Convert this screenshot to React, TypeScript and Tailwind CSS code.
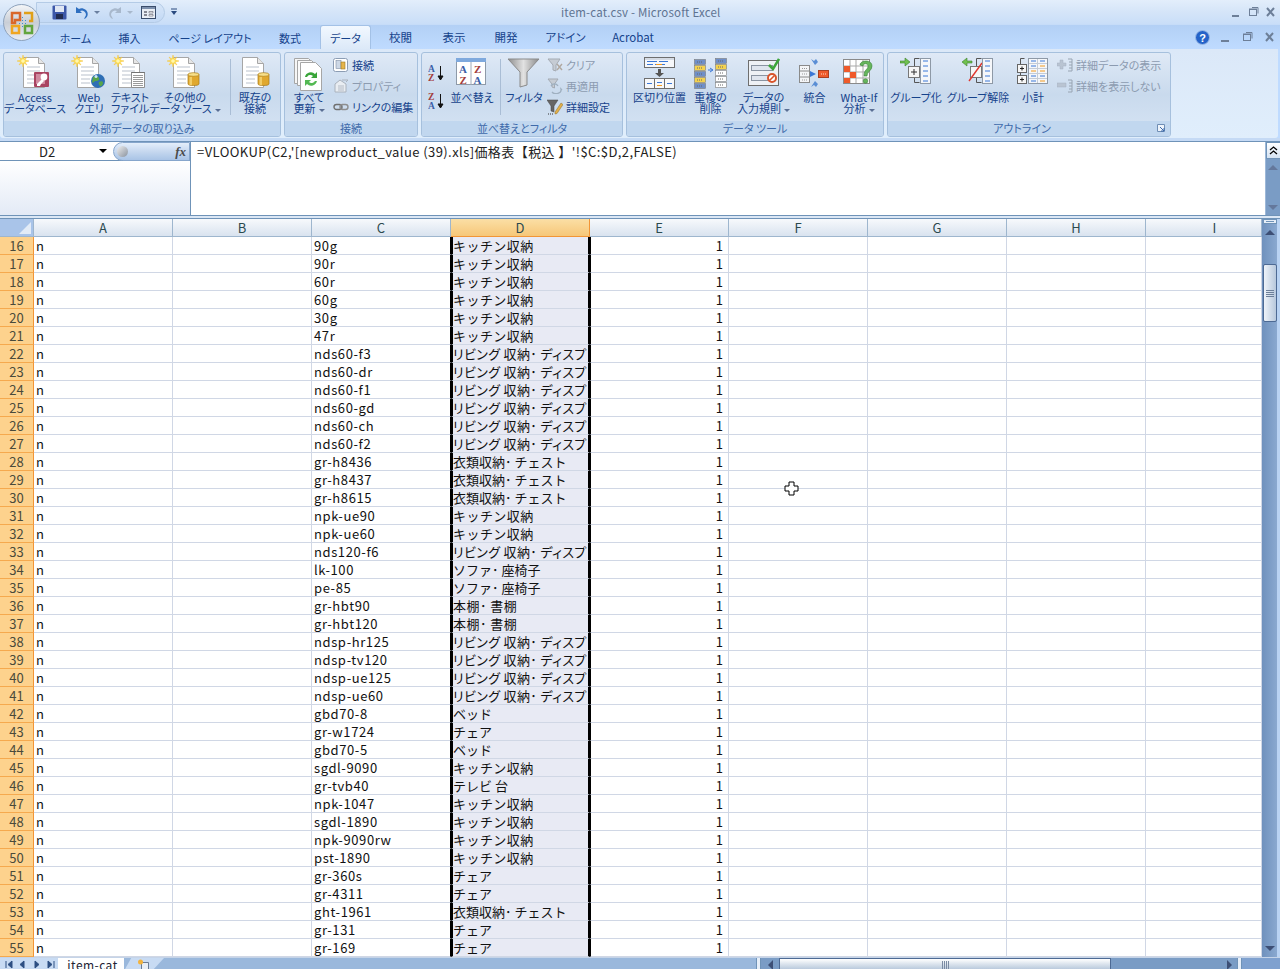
import React from "react";

const codes = ["90g","90r","60r","60g","30g","47r","nds60-f3","nds60-dr","nds60-f1","nds60-gd","nds60-ch","nds60-f2","gr-h8436","gr-h8437","gr-h8615","npk-ue90","npk-ue60","nds120-f6","lk-100","pe-85","gr-hbt90","gr-hbt120","ndsp-hr125","ndsp-tv120","ndsp-ue125","ndsp-ue60","gbd70-8","gr-w1724","gbd70-5","sgdl-9090","gr-tvb40","npk-1047","sgdl-1890","npk-9090rw","pst-1890","gr-360s","gr-4311","ght-1961","gr-131","gr-169"];
const K = "キッチン収納", L = "リビング 収納･ ディスプレイ", C = "衣類収納･ チェスト", S = "ソファ･ 座椅子", H = "本棚･ 書棚", B = "ベッド", T = "チェア";
const cats = [K,K,K,K,K,K,L,L,L,L,L,L,C,C,C,K,K,L,S,S,H,H,L,L,L,L,B,T,B,K,"テレビ 台",K,K,K,K,T,T,C,T,T];
const cols = ["A","B","C","D","E","F","G","H","I"];

const Star = ({ x = 0, y = 0 }: { x?: number; y?: number }) => (
  <g transform={`translate(${x} ${y})`}>
    <path d="M6 0l1 4 3-2-2 3 4 1-4 1 2 3-3-2-1 4-1-4-3 2 2-3-4-1 4-1-2-3 3 2z" fill="#ffe04d" stroke="#f5c542" strokeWidth=".5" />
    <circle cx="6" cy="6" r="1.8" fill="#fff6b0" />
  </g>
);
const Page = ({ x = 0, y = 0 }: { x?: number; y?: number }) => (
  <g transform={`translate(${x} ${y})`}>
    <path d="M.5.5h15l6 6v24H.5z" fill="#fff" stroke="#a6a6a6" />
    <path d="M15.5.5v6h6" fill="#e6e6e6" stroke="#a6a6a6" />
    <path d="M4 10h13M4 14h13M4 18h13M4 22h9M4 26h9" stroke="#b9c1cc" />
  </g>
);
const Db = ({ x = 0, y = 0 }: { x?: number; y?: number }) => (
  <g transform={`translate(${x} ${y})`}>
    <path d="M0 2.5C0 .8 11 .8 11 2.5V12c0 2-11 2-11 0z" fill="#e0a82e" stroke="#a87a16" strokeWidth=".7" />
    <ellipse cx="5.5" cy="2.5" rx="5.5" ry="1.8" fill="#f8e08a" stroke="#a87a16" strokeWidth=".6" />
    <rect x="1.5" y="5" width="2.5" height="8" fill="#f6d675" opacity=".8" />
  </g>
);
const Big = ({ children }: { children: React.ReactNode }) => (
  <svg width="36" height="36" viewBox="0 0 36 36" className="block">{children}</svg>
);
const IAccess = () => (
  <Big><Page x={6} y={2} /><Star x={0} y={0} />
    <rect x="17" y="17" width="15" height="15" rx="1" fill="#a94462" />
    <rect x="19" y="19" width="9" height="10" fill="#cf8aa0" />
    <circle cx="27" cy="22" r="3.4" fill="#fff" /><path d="M25 24l-5 5v2h3l1-2 3-3" fill="#fff" />
  </Big>
);
const IWeb = () => (
  <Big><Page x={6} y={2} /><Star x={0} y={0} />
    <circle cx="27" cy="26" r="7" fill="#2f6fb5" /><path d="M22 22c3-2 5-1 6 1s-1 3-3 3-3 3-4 1zM28 27c2-1 4-1 4 1s-2 4-3 3-2-3-1-4z" fill="#58a54a" /><circle cx="25" cy="21.5" r="1.5" fill="#cfe4f7" />
  </Big>
);
const IText = () => (
  <Big><Page x={6} y={2} /><Star x={0} y={0} />
    <path d="M19.5 17.5h13v15h-13z" fill="#fff" stroke="#8f8f8f" />
    <path d="M19.5 17.5h13" stroke="#555" strokeDasharray="1 1" />
    <path d="M21 20.500h10M21 22.500h10M21 24.500h10M21 26.500h10M21 28.500h10M21 30.500h10" stroke="#9a9a9a" />
  </Big>
);
const IOther = () => (<Big><Page x={6} y={2} /><Star x={0} y={0} /><Db x={21} y={17} /></Big>);
const IExisting = () => (<Big><Page x={5} y={2} /><Db x={21} y={17} /></Big>);
const IRefresh = () => (
  <Big>
    <path d="M3.500 3.500h14l5 5v20h-19z" fill="#f6f6f6" stroke="#a6a6a6" />
    <path d="M6.500 5.500h14l5 5v20h-19z" fill="#fafafa" stroke="#a6a6a6" />
    <path d="M9.500 7.500h15l6 6v22h-21z" fill="#fff" stroke="#a6a6a6" />
    <path d="M14 22a6 6 0 0 1 10-3l2-2v6h-6l2-2a4 4 0 0 0-6 1z" fill="#3aa53a" />
    <path d="M26 26a6 6 0 0 1-10 3l-2 2v-6h6l-2 2a4 4 0 0 0 6-1z" fill="#53b953" />
  </Big>
);
const ISort = () => (
  <svg width="32" height="30" viewBox="0 0 32 30" className="block">
    <rect x=".5" y=".5" width="29" height="26" fill="#fff" stroke="#8e9aa8" />
    <rect x="0" y="0" width="30" height="4" fill="#7fa9dd" />
    <path d="M15 4v23" stroke="#a0aab8" />
    <text x="3" y="15" fontSize="11" fontWeight="700" fill="#3b5ea8" fontFamily="'Liberation Serif',serif">A</text>
    <text x="3.500" y="25.500" fontSize="11" fontWeight="700" fill="#a23c3c" fontFamily="'Liberation Serif',serif">Z</text>
    <text x="18" y="15" fontSize="11" fontWeight="700" fill="#a23c3c" fontFamily="'Liberation Serif',serif">Z</text>
    <text x="17.500" y="25.500" fontSize="11" fontWeight="700" fill="#3b5ea8" fontFamily="'Liberation Serif',serif">A</text>
  </svg>
);
const SortSmall = ({ up }: { up: boolean }) => (
  <svg width="18" height="18" viewBox="0 0 18 18" className="block">
    <text x="0" y="8" fontSize="9.500" fontWeight="700" fill={up ? "#3b5ea8" : "#a23c3c"} fontFamily="'Liberation Serif',serif">{up ? "A" : "Z"}</text>
    <text x="0" y="17" fontSize="9.500" fontWeight="700" fill={up ? "#a23c3c" : "#3b5ea8"} fontFamily="'Liberation Serif',serif">{up ? "Z" : "A"}</text>
    <path d="M12.500 2v13M10 12l2.500 4 2.500-4z" stroke="#111" fill="#111" />
  </svg>
);
const IFunnel = () => (
  <svg width="34" height="30" viewBox="0 0 34 30" className="block">
    <defs><linearGradient id="fg" x1="0" x2="1" y1="0" y2="0"><stop offset="0" stopColor="#8d8d8d" /><stop offset=".5" stopColor="#e2e2e2" /><stop offset="1" stopColor="#8a8a8a" /></linearGradient></defs>
    <path d="M1 1h31L20 14v13l-7 2V14z" fill="url(#fg)" stroke="#8a8a8a" />
  </svg>
);
const Small = ({ children }: { children: React.ReactNode }) => (
  <svg width="16" height="16" viewBox="0 0 16 16" className="block shrink-0">{children}</svg>
);
const IConn = () => (<Small><rect x=".5" y="1.500" width="14" height="13" rx="2" fill="#fff" stroke="#8c9db4" /><rect x="3" y="3.500" width="5" height="8" fill="#cdd8e6" stroke="#7f8ea3" strokeWidth=".6" /><rect x="8" y="5" width="4" height="7" fill="#e5b44a" stroke="#9a7a25" strokeWidth=".6" /></Small>);
const IProp = () => (<Small><path d="M2 6l5-4 6 4v8H2z" fill="#e9edf2" stroke="#aab2bc" /><path d="M5 8h6M5 10h6M5 12h6" stroke="#b5bcc6" /><path d="M9 2h6l-2 2" stroke="#aab2bc" fill="none" /></Small>);
const ILink = () => (<Small><rect x="1" y="5.500" width="8" height="5" rx="2.500" fill="none" stroke="#6f6f6f" strokeWidth="1.400" /><rect x="7" y="5.500" width="8" height="5" rx="2.500" fill="none" stroke="#8e8e8e" strokeWidth="1.400" /></Small>);
const IClear = () => (<Small><path d="M1 2h12L9 8v6l-3-1V8z" fill="#c6ccd4" stroke="#a5abb3" /><path d="M10 7l5 6M15 7l-5 6" stroke="#b0a8a0" strokeWidth="1.400" /></Small>);
const IReapply = () => (<Small><path d="M1 1h10L7.500 6v4L5 9V6z" fill="#c6ccd4" stroke="#a5abb3" /><path d="M5 14a5 4 0 0 0 9-3l1 1M11 8a4 4 0 0 0-7 0" fill="none" stroke="#9fb0c0" strokeWidth="1.300" /></Small>);
const IAdv = () => (<Small><path d="M0 1h11L7 7v6l-3-1V7z" fill="#666" stroke="#444" strokeWidth=".5" /><path d="M8 13l6-9 2 1.500-6 9-2 .5z" fill="#e3b04b" stroke="#8c6c24" strokeWidth=".5" /><path d="M1 15h6" stroke="#333" strokeDasharray="1 1" /></Small>);
const DataIcon = ({ children, w = 32 }: { children: React.ReactNode; w?: number }) => (
  <svg width={w} height="32" viewBox={`0 0 ${w} 32`} className="block">{children}</svg>
);
const ITextCol = () => (
  <DataIcon><rect x=".5" y=".5" width="30" height="10" fill="#f7f8fa" stroke="#6e6e6e" /><rect x="1" y="1" width="29" height="2" fill="#d5dbe4" /><path d="M3 4.500h10M15 4.500h9M3 7.500h6M11 7.500h10" stroke="#3b78d8" /><path d="M12 7.500h6" stroke="#f29a1f" />
    <path d="M14 12h3v4h3l-4.500 4-4.500-4h3z" fill="#555" /><rect x=".5" y="21.500" width="30" height="10" fill="#f7f8fa" stroke="#6e6e6e" /><path d="M10.500 22v9M20.500 22v9" stroke="#6e6e6e" /><path d="M3 26.500h5M13 25.500h5M23 26.500h5" stroke="#3b78d8" /><path d="M13 28.500h5" stroke="#f29a1f" />
  </DataIcon>
);
const IDup = () => {
  const row = (x: number, y: number, c: string) => <g key={`${x}-${y}`}><rect x={x + .5} y={y + .5} width="11" height="5" fill={c} stroke="#7c7c7c" strokeWidth=".6" /><path d={`M${x + 3} ${y + 3}h6`} stroke="#666" strokeDasharray="1 1" /></g>;
  return (<DataIcon w={34}>{row(0,2,"#6f8fc9")}{row(0,8,"#f4d24e")}{row(0,14,"#6f8fc9")}{row(0,20,"#f4d24e")}{row(0,26,"#6f8fc9")}{row(21,1,"#6f8fc9")}{row(21,7,"#f4d24e")}{row(21,13,"#fff")}{row(21,19,"#fff")}{row(21,25,"#fff")}<path d="M14 13h4M16 11l3 2-3 2" stroke="#3b78d8" fill="none" /></DataIcon>);
};
const IValid = () => (
  <DataIcon><rect x=".5" y="3.500" width="30" height="25" fill="#eef1f5" stroke="#6e6e6e" /><rect x="3.500" y="8.500" width="21" height="5" fill="#dfe5ee" stroke="#8a94a2" /><rect x="3.500" y="18.500" width="21" height="5" fill="#dfe5ee" stroke="#8a94a2" /><path d="M21 8l4 4 6-10" fill="none" stroke="#3da53a" strokeWidth="2.500" /><circle cx="24" cy="21" r="4" fill="#fff" stroke="#d9542b" strokeWidth="2" /><path d="M21.500 23.500l5-5" stroke="#d9542b" strokeWidth="1.600" /></DataIcon>
);
const IConsol = () => (
  <DataIcon><rect x=".5" y="8.500" width="10" height="17" fill="#f4f5f7" stroke="#8a8a8a" /><path d="M.5 14h10M.5 20h10" stroke="#8a8a8a" /><path d="M3 11.500h5M3 17h5M3 23h5" stroke="#999" strokeDasharray="1 1" /><rect x="19.500" y="13.500" width="10" height="7" fill="#ef5a2a" stroke="#a93f20" /><path d="M22 17h5" stroke="#fbd9c6" strokeDasharray="1 1" /><path d="M11 14l6 3-6 3z" fill="#3b78d8" /><path d="M12 2l3 2 2-2 2 3-3 3-2-3z" fill="#5a8ed5" /><path d="M12 30l3-2 2 2 2-3-3-3-2 3z" fill="#5a8ed5" /></DataIcon>
);
const IWhatIf = () => (
  <DataIcon>
    <rect x=".5" y="2.500" width="26" height="24" fill="#fff" stroke="#8a8a8a" />
    <path d="M7 3v23M13 3v23M20 3v23M1 9h26M1 15h26M1 21h26" stroke="#a9a9a9" />
    <rect x="1" y="9" width="6" height="6" fill="#ef5a2a" /><rect x="7" y="15" width="6" height="6" fill="#ef5a2a" /><rect x="1" y="21" width="6" height="5" fill="#ef5a2a" />
    <path d="M17 8c0-5 12-6 12 1 0 5-5 5-5 10h-3c0-7 4-6 4-10 0-3-5-3-5 0z" fill="#67b55c" stroke="#39833a" strokeWidth=".6" /><circle cx="22.500" cy="24" r="2.300" fill="#67b55c" stroke="#39833a" strokeWidth=".6" />
  </DataIcon>
);
const Cells = ({ x, orange = false, n = 5 }: { x: number; orange?: boolean; n?: number }) => (
  <g>
    <rect x={x + .5} y="1.500" width="10" height={n * 5} fill="#f5f7fa" stroke="#8e99a6" />
    {Array.from({ length: n }).map((_, i) => <path key={i} d={`M${x + 3} ${4 + i * 5}h5`} stroke={orange && i % 2 ? "#f29a1f" : "#3b78d8"} />)}
  </g>
);
const IGroup = ({ un = false }: { un?: boolean }) => (
  <DataIcon w={32}>
    {un
      ? <path d="M10 4H5V1L0 5l5 4V6h5z" fill="#6fc04f" stroke="#3d7f2c" strokeWidth=".6" />
      : <path d="M0 4h5V1l5 4-5 4V6H0z" fill="#6fc04f" stroke="#3d7f2c" strokeWidth=".6" />}
    <path d="M19.500 1.500h-5v24h5" fill="none" stroke="#555" />
    <rect x="8.500" y="9.500" width="11" height="11" fill="#f6f6f6" stroke="#777" />
    {un ? <path d="M7 24L20 6" stroke="#e0362e" strokeWidth="1.400" /> : <path d="M11 15h6M14 12v6" stroke="#333" />}
    <Cells x={20} />
  </DataIcon>
);
const ISubtotal = () => (
  <DataIcon w={32}>
    <path d="M7.500 1.500h-4v24h4" fill="none" stroke="#555" />
    <rect x=".5" y="7.500" width="9" height="8" fill="#f6f6f6" stroke="#666" /><path d="M3 11.500h4M5 9.500v4" stroke="#222" />
    <rect x=".5" y="18.500" width="9" height="8" fill="#f6f6f6" stroke="#666" /><path d="M3 22.500h4M5 20.500v4" stroke="#222" />
    <rect x="11.500" y="1.500" width="19" height="25" fill="#f5f7fa" stroke="#8e99a6" /><path d="M20.500 2v24M12 6.500h18M12 11.500h18M12 16.500h18M12 21.500h18" stroke="#c5ccd6" />
    <path d="M14 4h5M14 9h5M14 19h5M14 24h5M23 4h5M23 19h5" stroke="#3b78d8" /><path d="M23 14h5M23 9h5M23 24h5M14 14h5" stroke="#f29a1f" />
  </DataIcon>
);
const IShow = ({ plus }: { plus: boolean }) => (
  <Small><path d={plus ? "M3 3h3v3h3v3H6v3H3V9H0V6h3z" : "M0 5h9v4H0z"} fill="#b9c4d2" stroke="#a7b2c0" strokeWidth=".5" /><path d="M11 2h4v12h-4M12 5h3M12 8h3M12 11h3" fill="none" stroke="#98a4b2" /></Small>
);

const Drop = () => <span className="inline-block ml-[3px] align-middle w-0 h-0 border-x-[3px] border-x-transparent border-t-[3px] border-t-[#5a6f94]" />;

const LargeBtn = ({ w, icon, lines, drop, ml = 0 }: { w: number; icon: React.ReactNode; lines: string[]; drop?: boolean; ml?: number }) => (
  <div className="flex flex-col items-center shrink-0 pt-px" style={{ width: w, marginLeft: ml }}>
    <div className="h-[36px] flex items-center justify-center">{icon}</div>
    <div className="mt-[1px] text-center leading-[11px] text-[11px] whitespace-nowrap text-[#15428b]">
      {lines.map((l, i) => <div key={i}>{l}{drop && i === lines.length - 1 ? <Drop /> : null}</div>)}
    </div>
  </div>
);
const SmallBtn = ({ icon, text, off }: { icon: React.ReactNode; text: string; off?: boolean }) => (
  <div className={`flex items-center gap-[3px] h-[22px] -mt-px first:mt-0 text-[11px] whitespace-nowrap ${off ? "text-[#8c9bb0]" : "text-[#15428b]"}`}>
    {icon}<span>{text}</span>
  </div>
);
const Group = ({ w, label, children, launcher }: { w: number; label: string; children: React.ReactNode; launcher?: boolean }) => (
  <div className="flex flex-col shrink-0 h-[85px] rounded-[3px] border border-[#a6c0dd] overflow-hidden bg-gradient-to-b from-[#dfe9f6] via-[#c9daed] to-[#d6e4f4]" style={{ width: w }}>
    <div className="flex-1 flex min-h-0 pt-[1px]">{children}</div>
    <div className="h-[15px] bg-[#c1d7ef] flex items-center justify-center text-[11px] leading-none text-[#3e6aaa] whitespace-nowrap">
      <span className="flex-1 text-center">{label}</span>
      {launcher && <svg width="11" height="11" viewBox="0 0 11 11" className="mr-[3px] shrink-0"><path d="M1.500 1.500h7v7h-7z" fill="#eef4fb" stroke="#6f8eb5" /><path d="M4 4l4 4M8 5v3H5" stroke="#3e6aaa" fill="none" /></svg>}
    </div>
  </div>
);
const Sep = ({ h = 56 }: { h?: number }) => <div className="w-px shrink-0 bg-[#a9bdd5] mt-[5px]" style={{ height: h }} />;

const tabs: [string, number][] = [["ホーム",55],["挿入",53],["ページ レイアウト",108],["数式",52]];
const tabs2: [string, number][] = [["校閲",55],["表示",52],["開発",52],["アドイン",67],["Acrobat",68]];

const WinBtns = ({ wide }: { wide?: boolean }) => wide ? (
  <svg width="53" height="14" viewBox="0 0 53 14" className="block shrink-0">
    <path d="M0 11h8" stroke="#6d7f98" strokeWidth="2" />
    <rect x="22.500" y="4.500" width="7" height="6" fill="none" stroke="#6d7f98" /><path d="M22 4h8M25 2.500h6v6" stroke="#6d7f98" fill="none" />
    <path d="M45 3l7 8M52 3l-7 8" stroke="#6d7f98" strokeWidth="2" />
  </svg>
) : (
  <svg width="44" height="14" viewBox="0 0 44 14" className="block shrink-0">
    <path d="M0 11h7" stroke="#6d7f98" strokeWidth="2" />
    <rect x="17.500" y="4.500" width="7" height="6" fill="none" stroke="#6d7f98" /><path d="M17 4h8M20 2.500h6v6" stroke="#6d7f98" fill="none" />
    <path d="M35 3l7 8M42 3l-7 8" stroke="#6d7f98" strokeWidth="2" />
  </svg>
);

export default function App() {
  return (
    <div className="relative w-[1280px] h-[969px] overflow-hidden bg-[#bfdbff] flex flex-col font-['Noto_Sans_CJK_JP','Liberation_Sans',sans-serif]">
      {/* office button */}
      <div className="absolute left-[3px] top-[4px] w-[37px] h-[37px] rounded-full border border-[#8ea2bb] bg-gradient-to-b from-[#f4f6f8] via-[#c9ced6] to-[#e8ecf2] flex items-center justify-center">
        <svg width="24" height="24" viewBox="0 0 24 24">
          <path d="M2 2h8v7H5v3H2z" fill="none" stroke="#d9672a" strokeWidth="2.500" />
          <path d="M14 2h8v8h-3" fill="none" stroke="#e0a019" strokeWidth="2.500" />
          <path d="M2 15h7v7H2z" fill="none" stroke="#f0a51e" strokeWidth="2.500" />
          <path d="M15 15h7v7h-7z" fill="none" stroke="#62a53d" strokeWidth="2.500" />
          <path d="M12 6h1v1h-1zM15 9h1v1h-1zM12 9h1v1h-1zM9 12h1v1H9zM12 12h1v1h-1zM15 12h1v1h-1zM12 15h1v1h-1z" fill="#3f8fce" />
        </svg>
      </div>
      {/* title bar */}
      <div className="h-[24px] shrink-0 flex items-center bg-gradient-to-b from-[#e3eefb] via-[#d5e5f8] to-[#c9def8]">
        <div className="w-[561px] shrink-0 flex items-center h-full">
          <div className="ml-[36px] w-[129px] h-[21px] mt-[1px] rounded-r-[11px] border border-[#b4cbe6] bg-gradient-to-b from-[#d7e6f8] to-[#c3d9f5] flex items-center pl-[15px] shrink-0">
            <svg width="15" height="15" viewBox="0 0 15 15" className="shrink-0"><rect x=".5" y=".5" width="14" height="14" rx="1" fill="#3c57a8" /><rect x="3" y="1" width="9" height="6" fill="#dfe6f3" /><rect x="4" y="9" width="7" height="5" fill="#222c4f" /></svg>
            <svg width="14" height="14" viewBox="0 0 14 14" className="ml-[8px] shrink-0"><path d="M1 1v6h6L5 5a4 4 0 0 1 5 6l-1 2c4-1 5-6 2-9-3-2-5-2-7-1z" fill="#2f6fc0" /></svg>
            <span className="ml-[5px] w-0 h-0 border-x-[3px] border-x-transparent border-t-[3px] border-t-[#6a7f9f]" />
            <svg width="14" height="14" viewBox="0 0 14 14" className="ml-[8px] shrink-0"><path d="M13 1v6H7l2-2a4 4 0 0 0-5 6l1 2c-4-1-5-6-2-9 3-2 5-2 7-1z" fill="#a8b8cc" /></svg>
            <span className="ml-[5px] w-0 h-0 border-x-[3px] border-x-transparent border-t-[3px] border-t-[#a8b8cc]" />
            <svg width="15" height="13" viewBox="0 0 15 13" className="ml-[8px] shrink-0"><rect x=".5" y=".5" width="14" height="12" fill="#e9eef5" stroke="#394c6b" /><rect x="1" y="1" width="13" height="2" fill="#7c90ad" /><path d="M3 6h3M3 9h3" stroke="#223" /><path d="M8 5.500h4v1.500H8zM8 8.500h4V10H8z" fill="#fff" stroke="#445" strokeWidth=".5" /></svg>
          </div>
          <svg width="8" height="8" viewBox="0 0 8 8" className="ml-[5px] shrink-0"><path d="M1 1h6" stroke="#2a4a7f" /><path d="M1 3h6L4 7z" fill="#2a4a7f" /></svg>
        </div>
        <div className="pt-px text-[11.5px] text-[#5e7391] tracking-[.18px] whitespace-nowrap">item-cat.csv - Microsoft Excel</div>
        <div className="flex-1" />
        <div className="mr-[4px]"><WinBtns /></div>
      </div>
      {/* tabs */}
      <div className="h-[25px] shrink-0 flex items-end bg-gradient-to-b from-[#b3d0f5] to-[#bfdbff] border-t border-t-[#c6dcf8] [font-feature-settings:'palt']">
        <div className="w-[48px] shrink-0" />
        {tabs.map(([t, w]) => <div key={t} style={{ width: w }} className="h-[24px] pt-[2px] shrink-0 flex items-center justify-center text-[11px] text-[#15428b] whitespace-nowrap">{t}</div>)}
        <div className="ml-[4px] w-[51px] h-[24px] pt-[2px] shrink-0 rounded-t-[3px] border border-b-0 border-[#a3c1e6] bg-gradient-to-b from-[#f2f8ff] to-[#dce9f8] flex items-center justify-center text-[11px] text-[#15428b]">データ</div>
        <div className="w-[2px] shrink-0" />
        {tabs2.map(([t, w]) => <div key={t} style={{ width: w }} className="h-[24px] pt-[2px] shrink-0 flex items-center justify-center text-[11.5px] text-[#15428b] whitespace-nowrap">{t}</div>)}
        <div className="flex-1" />
        <div className="h-[24px] flex items-center pr-[6px] gap-[11px]">
          <svg width="15" height="15" viewBox="0 0 15 15" className="block"><circle cx="7.500" cy="7.500" r="7" fill="#2563c9" stroke="#9cbbe6" /><text x="7.500" y="11.500" textAnchor="middle" fontSize="11" fontWeight="700" fill="#fff" fontFamily="'Liberation Sans',sans-serif">?</text></svg>
          <WinBtns wide />
        </div>
      </div>
      {/* ribbon */}
      <div className="h-[89px] shrink-0 flex items-start gap-[3px] pl-[3px] pt-[3px] bg-gradient-to-b from-[#dbe8f8] to-[#e0eefc] rounded-b-[3px] mr-[2px] [font-feature-settings:'palt']">
        <Group w={278} label="外部データの取り込み">
          <LargeBtn w={62} icon={<IAccess />} lines={["Access", "データベース"]} />
          <LargeBtn w={46} icon={<IWeb />} lines={["Web", "クエリ"]} />
          <LargeBtn w={36} icon={<IText />} lines={["テキスト", "ファイル"]} />
          <LargeBtn w={74} icon={<IOther />} lines={["その他の", "データ ソース"]} drop />
          <div className="w-[8px] shrink-0" /><Sep />
          <LargeBtn w={48} icon={<IExisting />} lines={["既存の", "接続"]} />
        </Group>
        <Group w={134} label="接続">
          <LargeBtn w={48} icon={<IRefresh />} lines={["すべて", "更新"]} drop />
          <div className="flex flex-col">
            <SmallBtn icon={<IConn />} text="接続" />
            <SmallBtn icon={<IProp />} text="プロパティ" off />
            <SmallBtn icon={<ILink />} text="リンクの編集" />
          </div>
        </Group>
        <Group w={202} label="並べ替えとフィルタ">
          <div className="flex flex-col w-[26px] pl-[6px] pt-[10px] gap-[10px] shrink-0"><SortSmall up /><SortSmall up={false} /></div>
          <LargeBtn w={48} icon={<ISort />} lines={["並べ替え"]} />
          <div className="w-[4px] shrink-0" /><Sep />
          <LargeBtn w={46} icon={<IFunnel />} lines={["フィルタ"]} />
          <div className="flex flex-col">
            <SmallBtn icon={<IClear />} text="クリア" off />
            <SmallBtn icon={<IReapply />} text="再適用" off />
            <SmallBtn icon={<IAdv />} text="詳細設定" />
          </div>
        </Group>
        <Group w={258} label="データ ツール">
          <LargeBtn w={65} icon={<ITextCol />} lines={["区切り位置"]} />
          <LargeBtn w={37} icon={<IDup />} lines={["重複の", "削除"]} />
          <LargeBtn w={65} ml={2} icon={<IValid />} lines={["データの", "入力規則"]} drop />
          <LargeBtn w={37} icon={<IConsol />} lines={["統合"]} />
          <LargeBtn w={46} ml={3} icon={<IWhatIf />} lines={["What-If", "分析"]} drop />
        </Group>
        <Group w={284} label="アウトライン" launcher>
          <LargeBtn w={54} ml={1} icon={<IGroup />} lines={["グループ化"]} />
          <LargeBtn w={66} ml={2} icon={<IGroup un />} lines={["グループ解除"]} />
          <LargeBtn w={40} ml={2} icon={<ISubtotal />} lines={["小計"]} />
          <div className="flex flex-col ml-[4px]">
            <SmallBtn icon={<IShow plus />} text="詳細データの表示" off />
            <SmallBtn icon={<IShow plus={false} />} text="詳細を表示しない" off />
          </div>
        </Group>
      </div>
      <div className="h-[3px] shrink-0 bg-[#c5daf5]" />
      {/* formula bar */}
      <div className="h-[75px] shrink-0 flex border-y border-[#6f93b8] bg-white">
        <div className="w-[191px] shrink-0 flex flex-col border-r border-[#6f93b8]">
          <div className="h-[19px] shrink-0 flex items-center border-b border-[#6f93b8]">
            <div className="w-[113px] shrink-0 flex items-center">
              <span className="ml-[39px] text-[13px] leading-none text-[#222]">D2</span>
              <span className="ml-[44px] w-0 h-0 border-x-[4px] border-x-transparent border-t-[4px] border-t-black" />
            </div>
            <div className="flex-1 h-[19px] rounded-l-[10px] bg-gradient-to-b from-[#e4eefb] via-[#c6d8ef] to-[#a9c4e6] border border-[#87a6cc] flex items-center justify-between pl-[3px] pr-[3px]">
              <span className="w-[11px] h-[11px] rounded-full bg-gradient-to-br from-[#f0f0f0] to-[#8a939f]" />
              <span className="font-['Liberation_Serif',serif] italic font-bold text-[13px] leading-none text-[#4a4a4a]">fx</span>
            </div>
          </div>
          <div className="flex-1 bg-gradient-to-b from-white to-[#e3eaf6]" />
        </div>
        <div className="flex-1 pl-[6px] pt-[2px] text-[13px] leading-[16px] text-[#222] tracking-[.42px] whitespace-nowrap">=VLOOKUP(C2,'[newproduct_value (39).xls]価格表【税込 】'!$C:$D,2,FALSE)</div>
        <div className="w-[15px] shrink-0 flex flex-col items-center bg-[#7a9cc5] border-l border-[#9db8d8]">
          <div className="w-[15px] h-[17px] bg-gradient-to-b from-white to-[#d5e3f3] border border-[#6f93b8] flex items-center justify-center">
            <svg width="9" height="9" viewBox="0 0 9 9"><path d="M1 4l3.500-3L8 4M1 8l3.500-3L8 8" fill="none" stroke="#000" strokeWidth="1.300" /></svg>
          </div>
          <span className="mt-[6px] w-0 h-0 border-x-[5px] border-x-transparent border-b-[5px] border-b-[#64789c]" />
          <div className="flex-1" />
          <span className="mb-[5px] w-0 h-0 border-x-[5px] border-x-transparent border-t-[5px] border-t-[#64789c]" />
        </div>
      </div>
      <div className="h-[3px] shrink-0 bg-[#dbe7f5] border-b border-[#6f93b8]" />
      {/* sheet */}
      <div className="h-[738px] shrink-0 flex bg-white">
        <div className="w-[1262px] shrink-0 flex flex-col">
          <div className="h-[18px] shrink-0 flex">
            <div className="w-[34px] shrink-0 bg-[#a9c4e9] border-r border-b border-[#9eb6ce] flex items-end justify-end p-[2px]">
              <span className="w-0 h-0 border-l-[12px] border-l-transparent border-b-[12px] border-b-[#e2ebf7]" />
            </div>
            {cols.map((c) => (
              <div key={c} className={`shrink-0 flex items-center justify-center text-[13px] text-[#2b4a4f] border-b border-r pt-px ${c === "D" ? "w-[139px] border-[#f29536] bg-gradient-to-b from-[#fbdfa5] to-[#f6c778]" : c === "I" ? "w-[116px] pl-[22px] border-[#9eb6ce] bg-gradient-to-b from-[#f7f9fc] to-[#d9e3ef]" : "w-[139px] border-[#9eb6ce] bg-gradient-to-b from-[#f7f9fc] to-[#d9e3ef]"}`}>{c}</div>
            ))}
          </div>
          {codes.map((code, i) => (
            <div key={i} className="h-[18px] shrink-0 flex text-[13px] leading-[18px] text-[#111] whitespace-nowrap">
              <div className="w-[34px] shrink-0 bg-[#fdd28d] border-r border-b border-r-[#f29536] border-b-[#f5a94e] flex items-center justify-center text-[#4a4a3a]">{i + 16}</div>
              <div className="w-[139px] shrink-0 border-r border-b border-[#d0d7e5] pl-[2px]">n</div>
              <div className="w-[139px] shrink-0 border-r border-b border-[#d0d7e5]" />
              <div className="w-[139px] shrink-0 border-r border-b border-[#d0d7e5] border-r-black pl-[2px] tracking-[.6px]">{code}</div>
              <div className={`w-[139px] shrink-0 overflow-hidden bg-[#e8eaf4] border-x-2 border-x-black border-b border-b-[#d0d7e5] ${cats[i] === L ? "[font-feature-settings:'palt'] tracking-[.35px]" : cats[i] === K || cats[i] === H ? "tracking-[.45px]" : ""}`}>{cats[i]}</div>
              <div className="w-[139px] shrink-0 border-l border-l-black border-r border-b border-[#d0d7e5] border-r-[#d0d7e5] text-right pr-[5px]">1</div>
              <div className="w-[139px] shrink-0 border-r border-b border-[#d0d7e5]" />
              <div className="w-[139px] shrink-0 border-r border-b border-[#d0d7e5]" />
              <div className="w-[139px] shrink-0 border-r border-b border-[#d0d7e5]" />
              <div className="w-[116px] shrink-0 border-r border-b border-[#d0d7e5]" />
            </div>
          ))}
        </div>
        {/* vertical scrollbar */}
        <div className="w-[15px] shrink-0 flex flex-col items-center bg-gradient-to-r from-[#6f91bd] to-[#8aa9d0]">
          <div className="w-[14px] h-[5px] bg-[#e6eef8] border border-[#6f93b8] flex items-center justify-center"><span className="w-[8px] h-px bg-[#6f93b8]" /></div>
          <span className="mt-[6px] w-0 h-0 border-x-[5px] border-x-transparent border-b-[5px] border-b-[#3d4f75]" />
          <div className="mt-[29px] w-[14px] h-[58px] rounded-[2px] border border-[#4d6a94] bg-gradient-to-r from-[#eef3f9] to-[#b7c8dc] flex flex-col items-center justify-center gap-[1px]">
            {[0,1,2,3].map((k) => <span key={k} className="w-[8px] h-px bg-[#6c7f99]" />)}
          </div>
          <div className="flex-1" />
          <span className="mb-[6px] w-0 h-0 border-x-[5px] border-x-transparent border-t-[5px] border-t-[#3d4f75]" />
        </div>
        <div className="w-[3px] shrink-0 bg-[#b9d3f3]" />
      </div>
      {/* sheet tabs + hscroll */}
      <div className="flex-1 flex items-stretch bg-[#9ab8dc] border-t border-t-[#c5d4e8] text-[11px] leading-none">
        <div className="w-[58px] shrink-0 bg-[#c8dbf3] flex items-center gap-[6px] pl-[5px] text-[#2d4f82]">
          <svg width="52" height="9" viewBox="0 0 52 9"><path d="M1 1v7M7 1L3 4.500 7 8zM19 1l-4 3.500L19 8zM30 1l4 3.500L30 8zM43 1l4 3.500L43 8zM49 1v7" stroke="#2d4f82" fill="#2d4f82" /></svg>
        </div>
        <div className="w-[66px] shrink-0 bg-white flex items-start justify-center pt-px pl-[3px] text-[12px] tracking-[.45px] text-[#223] overflow-hidden">item-cat</div>
        <div className="w-[40px] shrink-0 bg-[#c8dbf3] flex items-center justify-center [clip-path:polygon(18%_0,100%_0,70%_100%,0_100%)]">
          <svg width="14" height="11" viewBox="0 0 14 11"><path d="M4.500 3.500h7v7h-7z" fill="#e8eef6" stroke="#6a7c95" /><circle cx="3.500" cy="3" r="2.500" fill="#f3b33d" /></svg>
        </div>
        <div className="w-[592px] shrink-0" />
        <div className="w-[5px] shrink-0 bg-[#e6eef8] border-x border-[#6f93b8]" />
        <div className="w-[18px] shrink-0 bg-[#7a9cc5] flex items-center justify-center"><span className="w-0 h-0 border-y-[5px] border-y-transparent border-r-[5px] border-r-[#3d4f75]" /></div>
        <div className="w-[332px] shrink-0 bg-gradient-to-b from-white to-[#b3c5d9] border border-[#4d6a94] flex items-center justify-center gap-px">
          {[0,1,2,3].map((k) => <span key={k} className="w-px h-[8px] bg-[#7a8ba3]" />)}
        </div>
        <div className="flex-1 bg-[#7a9cc5] flex items-center justify-end">
          <span className="w-0 h-0 border-y-[5px] border-y-transparent border-l-[5px] border-l-[#3d4f75] mr-[5px]" />
          <span className="w-[5px] h-full bg-[#e6eef8] border-x border-[#6f93b8]" />
          <span className="w-[38px] h-full bg-[#7fa1cf]" />
        </div>
      </div>
      {/* cell cursor */}
      <svg width="15" height="15" viewBox="0 0 15 15" className="absolute left-[784px] top-[481px]"><path d="M5 1h5v4h4v5h-4v4H5v-4H1V5h4z" fill="#fff" stroke="#000" /></svg>
    </div>
  );
}
